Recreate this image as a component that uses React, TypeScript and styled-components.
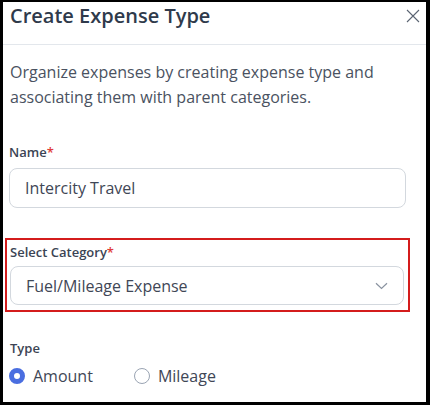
import React from "react";
import styled, { createGlobalStyle } from "styled-components";

const Global = createGlobalStyle`
  html, body { margin: 0; padding: 0; background: #000; }
  * { box-sizing: border-box; }
  body { font-family: "Open Sans", "Noto Sans", sans-serif; }
`;

const Frame = styled.div`
  width: 430px;
  height: 405px;
  background: #000;
  padding: 2px 4px 3px 3px;
`;

const Modal = styled.div`
  background: #fff;
  height: 100%;
  overflow: hidden;
  display: flex;
  flex-direction: column;
`;

const Header = styled.div`
  height: 43px;
  flex: none;
  display: flex;
  align-items: flex-start;
  justify-content: space-between;
  padding: 0 6px 0 7px;
  border-bottom: 1px solid #e3e7ec;
`;

const Title = styled.h1`
  margin: 0;
  font-size: 20px;
  line-height: 28px;
  font-weight: 600;
  color: #2f3a4b;
`;

const Close = styled.button`
  border: none;
  background: none;
  padding: 0;
  margin-top: 7px;
  width: 14px;
  height: 14px;
  display: flex;
`;

const Body = styled.div`
  padding: 15px 20px 0 7px;
  display: flex;
  flex-direction: column;
`;

const Description = styled.p`
  margin: 0 0 33px;
  font-size: 16px;
  line-height: 25px;
  color: #4a5261;
`;

const Field = styled.div<{ $highlight?: boolean }>`
  display: flex;
  flex-direction: column;
  gap: ${(p) => (p.$highlight ? "5px" : "7px")};
  margin: ${(p) => (p.$highlight ? "0 -4px 0 -5px" : "0 0 0 -1px")};
  padding: ${(p) => (p.$highlight ? "3px 4px 5px 3px" : "0")};
  border: ${(p) => (p.$highlight ? "2px solid #d41c1c" : "none")};
`;

const Label = styled.label`
  font-size: 13px;
  font-weight: 600;
  color: #3b4454;
  line-height: 18px;
`;

const Req = styled.span`
  color: #e03a3a;
`;

const InputBox = styled.div<{ $h: number }>`
  height: ${(p) => p.$h}px;
  border: 1px solid #d3d8de;
  border-radius: 8px;
  display: flex;
  align-items: center;
  justify-content: space-between;
  padding: 0 15px 0 15px;
  font-size: 16px;
  color: #3f4756;
`;

const Spacer = styled.div<{ $h: number }>`
  height: ${(p) => p.$h}px;
  flex: none;
`;

const RadioRow = styled.div`
  display: flex;
  align-items: center;
  gap: 41px;
  margin: 7px 0 0 -1px;
`;

const RadioItem = styled.label`
  display: flex;
  align-items: center;
  gap: 8px;
  font-size: 16px;
  line-height: 24px;
  color: #3f4756;
`;

const Dot = styled.span<{ $on?: boolean }>`
  width: 16px;
  height: 16px;
  border-radius: 50%;
  flex: none;
  border: ${(p) => (p.$on ? "5px solid #4a6ee0" : "1.5px solid #9aa4b3")};
  background: #fff;
`;

export default function App() {
  return (
    <>
      <Global />
      <Frame>
        <Modal>
          <Header>
            <Title>Create Expense Type</Title>
            <Close aria-label="Close">
              <svg width="14" height="14" viewBox="0 0 14 14">
                <path d="M1 1L13 13M13 1L1 13" stroke="#5b6472" strokeWidth="1.1" />
              </svg>
            </Close>
          </Header>
          <Body>
            <Description>
              Organize expenses by creating expense type and associating them with parent categories.
            </Description>
            <Field>
              <Label>
                Name<Req>*</Req>
              </Label>
              <InputBox $h={40}>Intercity Travel</InputBox>
            </Field>
            <Spacer $h={30} />
            <Field $highlight>
              <Label>
                Select Category<Req>*</Req>
              </Label>
              <InputBox $h={39}>
                Fuel/Mileage Expense
                <svg width="13" height="8" viewBox="0 0 13 8">
                  <path d="M1 1.2L6.5 6.5L12 1.2" fill="none" stroke="#8a93a0" strokeWidth="1.2" />
                </svg>
              </InputBox>
            </Field>
            <Spacer $h={27} />
            <Label>Type</Label>
            <RadioRow>
              <RadioItem>
                <Dot $on />
                Amount
              </RadioItem>
              <RadioItem>
                <Dot />
                Mileage
              </RadioItem>
            </RadioRow>
          </Body>
        </Modal>
      </Frame>
    </>
  );
}
